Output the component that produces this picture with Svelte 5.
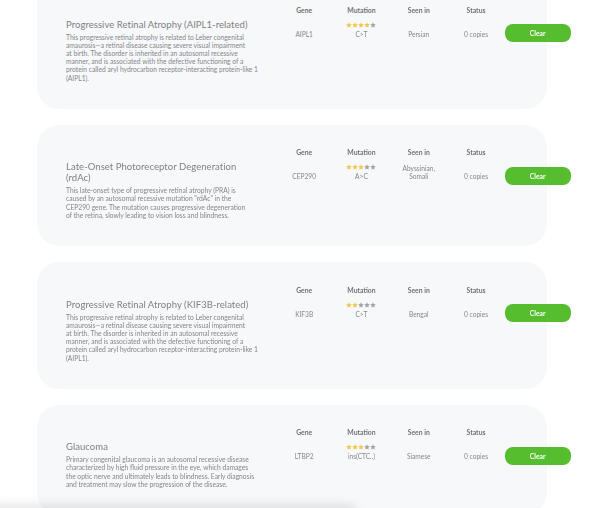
<script>
  const rows = [
    {
      title: "Progressive Retinal Atrophy (AIPL1-related)",
      text: "This progressive retinal atrophy is related to Leber congenital amaurosis—a retinal disease causing severe visual impairment at\u00a0birth. The disorder is inherited in an autosomal recessive manner, and is associated with the defective functioning of a protein called aryl hydrocarbon receptor-interacting protein-like 1 (AIPL1).",
      gene: "AIPL1", stars: 4, mutation: "C>T", seen: "Persian",
    },
    {
      title: "Late-Onset Photoreceptor Degeneration (rdAc)",
      text: "This late-onset type of progressive retinal atrophy (PRA) is caused\u00a0by an autosomal recessive mutation \"rdAc\" in the CEP290\u00a0gene. The mutation causes progressive degeneration of\u00a0the\u00a0retina, slowly leading to vision loss and blindness.",
      gene: "CEP290", stars: 3, mutation: "A>C", seen: "Abyssinian, Somali",
    },
    {
      title: "Progressive Retinal Atrophy (KIF3B-related)",
      text: "This progressive retinal atrophy is related to Leber congenital amaurosis—a retinal disease causing severe visual impairment at\u00a0birth. The disorder is inherited in an autosomal recessive manner, and is associated with the defective functioning of a protein called aryl hydrocarbon receptor-interacting protein-like 1 (AIPL1).",
      gene: "KIF3B", stars: 2, mutation: "C>T", seen: "Bengal",
    },
    {
      title: "Glaucoma",
      text: "Primary congenital glaucoma is an autosomal recessive disease characterized by high fluid pressure in the eye, which damages the optic nerve and ultimately leads to blindness. Early diagnosis and treatment may slow the progression of the disease.",
      gene: "LTBP2", stars: 3, mutation: "ins(CTC..)", seen: "Siamese",
    },
  ];
</script>

<div class="page">
  <div class="list">
    {#each rows as row}
      <section class="card">
        <div class="info">
          <h3>{row.title}</h3>
          <p>{row.text}</p>
        </div>
        <div class="col">
          <h4>Gene</h4>
          <div class="slot"><span>{row.gene}</span></div>
        </div>
        <div class="col">
          <h4>Mutation</h4>
          <div class="slot">
            <div class="stars">
              {#each [1, 2, 3, 4, 5] as n}
                <svg viewBox="0 0 24 24" class:on={n <= row.stars}>
                  <path d="M12 1l3.4 7.2 7.6 1-5.6 5.400 1.400 7.800L12 18.600l-6.800 3.800 1.400-7.800L1 9.200l7.600-1z" />
                </svg>
              {/each}
            </div>
            <span>{row.mutation}</span>
          </div>
        </div>
        <div class="col">
          <h4>Seen in</h4>
          <div class="slot"><span>{row.seen}</span></div>
        </div>
        <div class="col">
          <h4>Status</h4>
          <div class="slot"><span>0 copies</span></div>
        </div>
        <button>Clear</button>
      </section>
    {/each}
  </div>
  <div class="shade"></div>
</div>

<style>
  :global(body) {
    margin: 0;
    background: #fff;
  }
  .page {
    position: relative;
    height: 508px;
    overflow: hidden;
    font-family: Lato, "Noto Sans", sans-serif;
    filter: blur(0.4px);
  }
  .list {
    display: flex;
    flex-direction: column;
    gap: 16px;
    margin: -18px 0 0 37px;
    width: 510px;
  }
  .card {
    display: flex;
    align-items: flex-start;
    box-sizing: border-box;
    padding: 23.500px 0 27px 29px;
    background: #f7f8fa;
    border-radius: 22px;
  }
  .info {
    width: 192px;
    margin-top: 13px;
    margin-right: 17.500px;
    flex: none;
  }
  h3 {
    margin: 0 0 3px;
    font-size: 9.500px;
    line-height: 11px;
    font-weight: 400;
    letter-spacing: 0.05px;
    color: #7f8083;
  }
  p {
    margin: 0;
    font-size: 6.700px;
    line-height: 8.200px;
    color: #85868a;
  }
  .col {
    width: 57.300px;
    flex: none;
    text-align: center;
    font-size: 6.600px;
    line-height: 8px;
    color: #85868a;
  }
  h4 {
    margin: 0;
    font-size: 6.800px;
    line-height: 9px;
    font-weight: 700;
    color: #707174;
  }
  .slot {
    height: 23px;
    padding: 0 6px;
    display: flex;
    flex-direction: column;
    justify-content: flex-end;
  }
  .stars {
    display: flex;
    justify-content: center;
    height: 8px;
  }
  svg {
    width: 6px;
    height: 6px;
    fill: #a5a6a8;
  }
  svg.on {
    fill: #f0c94e;
  }
  button {
    width: 66px;
    height: 18px;
    margin: 18.500px 0 0 0;
    flex: none;
    padding: 0;
    border: 0;
    border-radius: 8px;
    background: #56be2e;
    color: #fff;
    font: 700 6.800px Lato, sans-serif;
  }
  .shade {
    position: absolute;
    left: -10px;
    width: 365px;
    bottom: -14px;
    height: 14px;
    box-shadow: 0 -2px 12px rgba(0, 0, 0, 0.13);
  }
</style>
